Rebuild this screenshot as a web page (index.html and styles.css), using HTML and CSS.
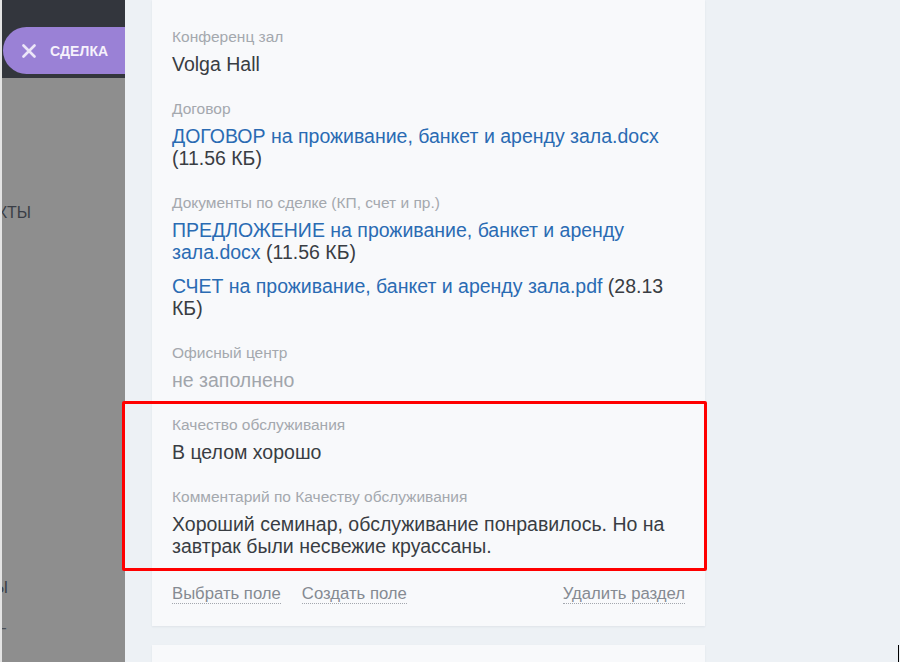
FILE: index.html
```html
<!DOCTYPE html>
<html lang="ru">
<head>
<meta charset="utf-8">
<title>Сделка</title>
<link rel="stylesheet" href="styles.css">
</head>
<body>
<div class="app">
  <aside class="sidebar">
    <div class="sidebar-top">
      <div class="deal-pill">
        <svg class="deal-pill__icon" width="14" height="14" viewBox="0 0 14 14"><path d="M1.5 1.5 L12.5 12.5 M12.5 1.5 L1.5 12.5" stroke="#ece6f8" stroke-width="2.6" stroke-linecap="round"/></svg>
        <span class="deal-pill__text">Сделка</span>
      </div>
    </div>
    <nav class="nav">
      <div class="nav-item nav-item--contacts">Контакты</div>
      <div class="nav-item nav-item--widgets">Виджеты</div>
      <div class="nav-item nav-item--more">Ещё —</div>
    </nav>
  </aside>

  <main class="content">
    <section class="card">
      <div class="field">
        <div class="field__label">Конференц зал</div>
        <div class="field__value">Volga Hall</div>
      </div>
      <div class="field">
        <div class="field__label">Договор</div>
        <div class="field__value"><a class="file-link" href="#">ДОГОВОР на проживание, банкет и аренду зала.docx</a> (11.56 КБ)</div>
      </div>
      <div class="field">
        <div class="field__label">Документы по сделке (КП, счет и пр.)</div>
        <div class="field__value doc"><a class="file-link" href="#">ПРЕДЛОЖЕНИЕ на проживание, банкет и аренду зала.docx</a> (11.56 КБ)</div>
        <div class="field__value doc"><a class="file-link" href="#">СЧЕТ на проживание, банкет и аренду зала.pdf</a> (28.13 КБ)</div>
      </div>
      <div class="field">
        <div class="field__label">Офисный центр</div>
        <div class="field__value field__value--empty">не заполнено</div>
      </div>
      <div class="highlight-group">
        <div class="field">
          <div class="field__label">Качество обслуживания</div>
          <div class="field__value">В целом хорошо</div>
        </div>
        <div class="field">
          <div class="field__label">Комментарий по Качеству обслуживания</div>
          <div class="field__value">Хороший семинар, обслуживание понравилось. Но на завтрак были несвежие круассаны.</div>
        </div>
      </div>
      <div class="card-actions">
        <span class="action">Выбрать поле</span>
        <span class="action">Создать поле</span>
        <span class="action action--right">Удалить раздел</span>
      </div>
    </section>
    <section class="card card--next"></section>
  </main>
  <div class="cursor-mark"></div>
</div>
</body>
</html>
```
FILE: styles.css
```css
html, body {
  margin: 0;
  padding: 0;
  height: 662px;
  overflow: hidden;
}

body {
  font-family: "Liberation Sans", Arial, sans-serif;
  background: #edf1f5;
}

.app {
  display: flex;
  height: 662px;
  position: relative;
  overflow: hidden;
}

/* Sidebar (dimmed) */
.sidebar {
  width: 125px;
  flex: 0 0 125px;
  box-sizing: border-box;
  border-left: 2px solid #e4e4e4;
  background: #8e8e8e;
  overflow: hidden;
  display: flex;
  flex-direction: column;
}

.sidebar-top {
  height: 78px;
  box-sizing: border-box;
  background: #33363d;
  padding-top: 27px;
  padding-left: 1px;
}

.deal-pill {
  height: 47px;
  width: 150px;
  box-sizing: border-box;
  background: #9a81d6;
  border-radius: 24px 0 0 24px;
  display: flex;
  align-items: center;
  padding-left: 19px;
  gap: 14px;
}

.deal-pill__icon {
  display: block;
  flex: 0 0 auto;
}

.deal-pill__text {
  color: #f6f2fc;
  font-weight: bold;
  font-size: 14px;
  text-transform: uppercase;
  letter-spacing: 0.1px;
}

.nav {
  padding-top: 125px;
  display: flex;
  flex-direction: column;
}

.nav-item {
  height: 20px;
  line-height: 20px;
  font-size: 16px;
  color: #3a3e46;
  white-space: nowrap;
  text-transform: uppercase;
  display: flex;
  justify-content: flex-end;
}

.nav-item--contacts { width: 29px; }
.nav-item--widgets { width: 6px; margin-top: 355px; }
.nav-item--more { width: 4px; margin-top: 20px; color: #4a4e55; }

/* Main area */
.content {
  flex: 1;
  padding-left: 27px;
  background: #edf1f5;
}

.card {
  width: 553px;
  box-sizing: border-box;
  background: #f8f9fb;
  padding: 28px 20px 22px 20px;
  box-shadow: 0 1px 2px rgba(40, 50, 70, 0.07);
}

.card--next {
  margin-top: 19px;
  height: 17px;
  padding: 0;
}

.field + .field,
.field + .highlight-group {
  margin-top: 25px;
}

.field__label {
  font-size: 15.5px;
  line-height: 18px;
  color: #a4a8ae;
  margin-bottom: 7px;
}

.field__value {
  font-size: 19.5px;
  line-height: 22px;
  color: #393d43;
}

.field__value--empty {
  color: #a1a5ab;
}

.doc + .doc {
  margin-top: 12px;
}

.file-link {
  color: #2a6bb3;
  text-decoration: none;
}

.highlight-group {
  position: relative;
}

.highlight-group::after {
  content: "";
  position: absolute;
  top: -15px;
  left: -50px;
  right: -22px;
  bottom: -14px;
  border: 3px solid #ff0000;
  border-radius: 2px;
  pointer-events: none;
}

.card-actions {
  margin-top: 27px;
  display: flex;
  gap: 21px;
  font-size: 16.7px;
  line-height: 20px;
  color: #858a92;
}

.action {
  border-bottom: 1px dotted #a3a7ae;
  line-height: 19px;
}

.action--right {
  margin-left: auto;
}

.cursor-mark {
  position: absolute;
  right: 1px;
  top: 645px;
  width: 1px;
  height: 17px;
  background: #000;
}
```
